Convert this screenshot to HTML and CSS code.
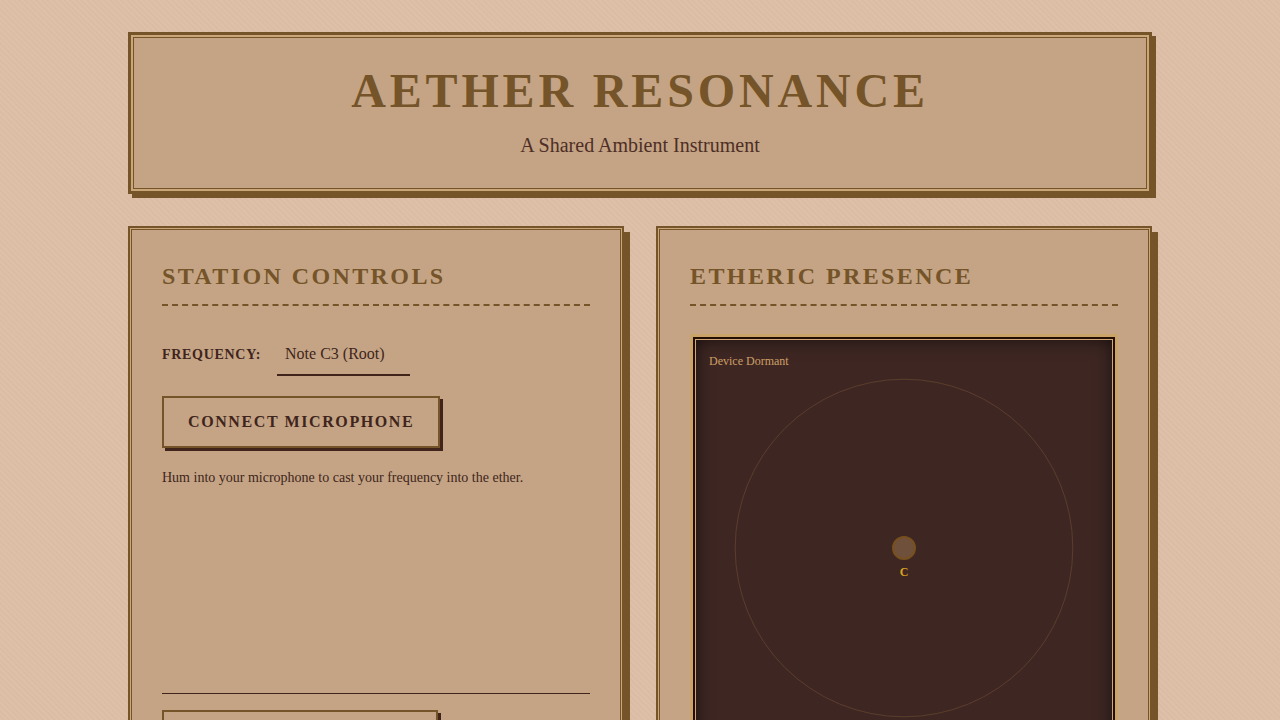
FILE: index.html
```html
<!DOCTYPE html>
<html lang="en">
<head>
  <meta charset="UTF-8">
  <meta name="viewport" content="width=device-width, initial-scale=1.0">
  <title>Aether Resonance</title>
  <link rel="stylesheet" href="styles.css">
</head>
<body>
  <div class="container">
    <header class="masthead">
      <h1>Aether Resonance</h1>
      <p class="subtitle">A Shared Ambient Instrument</p>
    </header>

    <main class="panels">
      <section class="panel">
        <h2>Station Controls</h2>
        <div class="field">
          <label for="note-select">Frequency:</label>
          <select id="note-select">
            <option>Note C3 (Root)</option>
          </select>
        </div>
        <button type="button" id="mic-button">Connect Microphone</button>
        <p class="hint">Hum into your microphone to cast your frequency into the ether.</p>
        <div class="actions">
          <button type="button" id="start-button">Activate Instrument</button>
        </div>
      </section>

      <section class="panel">
        <h2>Etheric Presence</h2>
        <div class="scope">
          <svg viewBox="0 0 422 422" role="img" aria-label="Etheric presence">
            <circle class="orbit" cx="211" cy="211" r="168.8"/>
            <circle class="node" cx="211" cy="211" r="11"/>
            <text class="node-label" x="211" y="239">C</text>
          </svg>
          <div class="status">Device Dormant</div>
        </div>
      </section>
    </main>
  </div>
</body>
</html>
```
FILE: styles.css
```css
:root {
  --paper: #debfa8;
  --panel: #c4a484;
  --brass: #755429;
  --gold: #c9a367;
  --ink: #40241c;
  --dark: #3e2723;
}

* {
  box-sizing: border-box;
}

body {
  margin: 0;
  padding: 32px;
  font-family: "Liberation Serif", "Times New Roman", serif;
  color: var(--ink);
  background-color: var(--paper);
  background-image: repeating-linear-gradient(45deg, transparent, transparent 2px, rgba(139, 90, 43, 0.03) 2px, rgba(139, 90, 43, 0.03) 4px);
}

.container {
  max-width: 1024px;
  margin: 0 auto;
}

.masthead {
  position: relative;
  margin-bottom: 32px;
  padding: 29px;
  text-align: center;
  background: var(--panel);
  border: 3px solid var(--brass);
  box-shadow: 4px 4px 0 var(--brass);
}

/* thin engraved line inside each frame */
.masthead::before,
.panel::before {
  content: "";
  position: absolute;
  inset: 2px;
  border: 1px solid var(--brass);
  outline: 2px solid #caa678;
  pointer-events: none;
}

.panel::before {
  inset: 1px;
  outline-width: 1px;
}

h1 {
  margin: 0 0 12px;
  font-size: 48px;
  line-height: 54px;
  letter-spacing: 0.08em;
  text-transform: uppercase;
  color: var(--brass);
}

.subtitle {
  margin: 0 0 2px;
  font-size: 20px;
  line-height: 30px;
  color: #4e2e26;
}

.panels {
  display: grid;
  grid-template-columns: 1fr 1fr;
  gap: 32px;
}

.panel {
  position: relative;
  display: flex;
  flex-direction: column;
  align-items: flex-start;
  padding: 32px;
  background: var(--panel);
  border: 2px solid var(--brass);
  box-shadow: 6px 6px 0 var(--brass);
}

h2 {
  width: 100%;
  margin: 0 0 28px;
  padding-bottom: 12px;
  font-size: 24px;
  line-height: 32px;
  letter-spacing: 0.1em;
  text-transform: uppercase;
  color: var(--brass);
  border-bottom: 2px dashed var(--brass);
}

.field {
  display: flex;
  align-items: center;
  gap: 16px;
  margin-bottom: 20px;
}

label {
  font-size: 14px;
  font-weight: bold;
  letter-spacing: 0.05em;
  text-transform: uppercase;
}

select {
  width: 133px;
  height: 42px;
  padding: 0 8px 2px;
  font-family: inherit;
  font-size: 16px;
  color: var(--ink);
  background: transparent;
  border: 0;
  border-bottom: 2px solid var(--ink);
  border-radius: 0;
  appearance: none;
}

button {
  padding: 12px 24px;
  font-family: inherit;
  font-size: 16px;
  font-weight: bold;
  line-height: 24px;
  letter-spacing: 0.1em;
  text-transform: uppercase;
  color: var(--ink);
  background: var(--panel);
  border: 2px solid var(--brass);
  box-shadow: 3px 3px 0 var(--ink);
  cursor: pointer;
}

.hint {
  margin: 20px 0;
  font-size: 14px;
  line-height: 20px;
}

.actions {
  width: 100%;
  margin-top: auto;
  padding-top: 16px;
  border-top: 1px solid var(--ink);
}

.scope {
  position: relative;
  width: 100%;
  aspect-ratio: 1;
  background: var(--dark);
  border: 3px solid var(--gold);
  box-shadow: inset 0 0 0 2px #240d05, inset 0 0 0 3px #d0a875, inset 0 0 20px rgba(0, 0, 0, 0.8);
}

.scope svg {
  display: block;
  width: 100%;
}

.orbit {
  fill: none;
  stroke: #5b3d2b;
}

.node {
  fill: #6f503a;
  stroke: #77501f;
  stroke-width: 2px;
}

.node-label {
  font-size: 12px;
  font-weight: bold;
  text-anchor: middle;
  fill: #daa520;
}

.status {
  position: absolute;
  top: 16px;
  left: 16px;
  font-size: 12px;
  line-height: 16px;
  color: #cd9f66;
}

@media (max-width: 768px) {
  .panels {
    grid-template-columns: 1fr;
  }
}
```
